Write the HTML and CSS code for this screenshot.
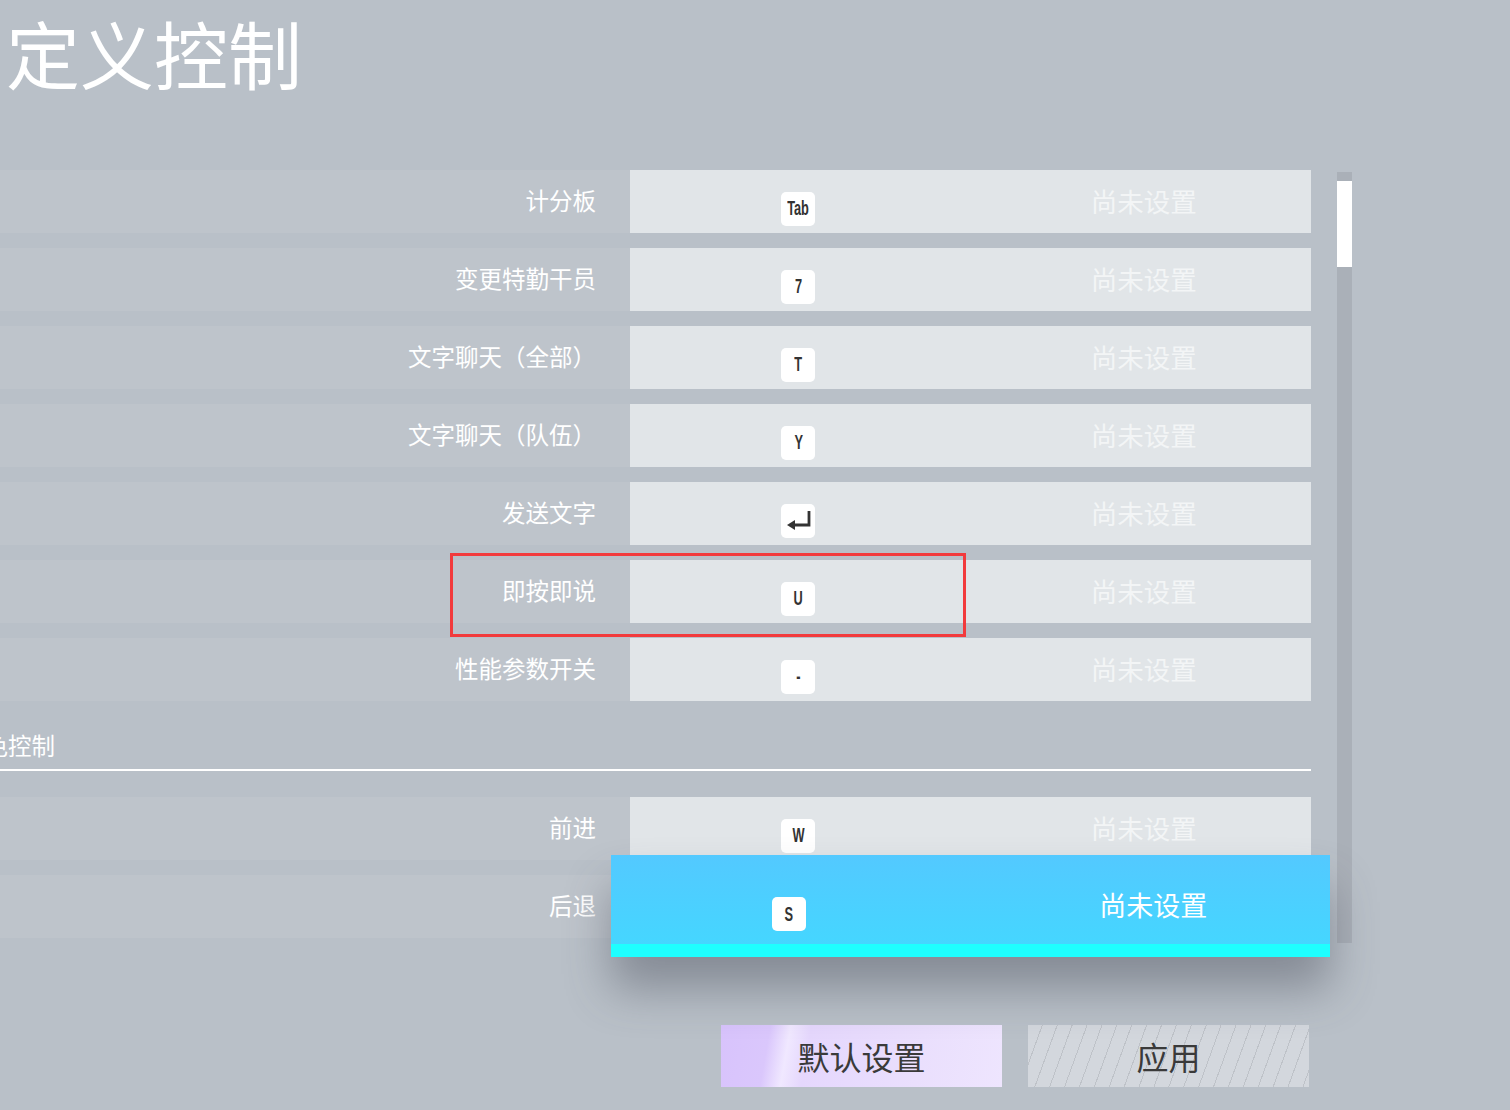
FILE: index.html
```html
<!DOCTYPE html>
<html lang="zh-CN">
<head>
<meta charset="UTF-8">
<title>自定义控制</title>
<link rel="stylesheet" href="styles.css">
</head>
<body>

<div class="page">
    <h1 class="title">定义控制</h1>

    <div class="panel">
        <div class="list">
            <div class="row"><div class="label">计分板</div><div class="bind"><div class="slot"><span class="key"><b>Tab</b></span></div><div class="slot"><span class="unset">尚未设置</span></div></div></div>
            <div class="row"><div class="label">变更特勤干员</div><div class="bind"><div class="slot"><span class="key"><b>7</b></span></div><div class="slot"><span class="unset">尚未设置</span></div></div></div>
            <div class="row"><div class="label">文字聊天（全部）</div><div class="bind"><div class="slot"><span class="key"><b>T</b></span></div><div class="slot"><span class="unset">尚未设置</span></div></div></div>
            <div class="row"><div class="label">文字聊天（队伍）</div><div class="bind"><div class="slot"><span class="key"><b>Y</b></span></div><div class="slot"><span class="unset">尚未设置</span></div></div></div>
            <div class="row"><div class="label">发送文字</div><div class="bind"><div class="slot"><span class="key"><svg width="34" height="34" viewBox="0 0 34 34"><path d="M28 7 V21 H12" fill="none" stroke="#333" stroke-width="2.8"/><path d="M6 21 L14 16 V26 Z" fill="#333"/></svg></span></div><div class="slot"><span class="unset">尚未设置</span></div></div></div>
            <div class="row"><div class="label">即按即说</div><div class="bind"><div class="slot"><span class="key"><b>U</b></span></div><div class="slot"><span class="unset">尚未设置</span></div></div><div class="mark"></div></div>
            <div class="row"><div class="label">性能参数开关</div><div class="bind"><div class="slot"><span class="key"><b>-</b></span></div><div class="slot"><span class="unset">尚未设置</span></div></div></div>

            <div class="section"><span>角色控制</span></div>

            <div class="row"><div class="label">前进</div><div class="bind"><div class="slot"><span class="key"><b>W</b></span></div><div class="slot"><span class="unset">尚未设置</span></div></div></div>
            <div class="row active"><div class="label">后退</div><div class="bind"><div class="slot"><span class="key"><b>S</b></span></div><div class="slot"><span class="unset">尚未设置</span></div></div></div>
        </div>

        <div class="scrollbar"><div class="thumb"></div></div>
    </div>

    <div class="actions">
        <button class="btn btn-default">默认设置</button>
        <button class="btn btn-apply">应用</button>
    </div>
</div>

</body>
</html>
```

FILE: styles.css
```css
body {
    margin: 0;
    background: #b9c0c8;
    font-family: "Noto Sans CJK SC", "Noto Sans", sans-serif;
    color: #fff;
    overflow: hidden;
}
.page { width: 1510px; height: 1110px; overflow: hidden; }

.title {
    margin: 0;
    padding-left: 6px;
    font-size: 74px;
    font-weight: 400;
    line-height: 104px;
}

.panel {
    display: flex;
    align-items: flex-start;
    margin-top: 66px;
}
.list { width: 1311px; }

.row {
    position: relative;
    display: grid;
    grid-template-columns: 630px 681px;
    height: 63px;
    margin-bottom: 15px;
}
.label {
    display: flex;
    align-items: center;
    justify-content: flex-end;
    padding: 0 34px 3px 0;
    background: #bec4cb;
    font-size: 23.5px;
}
.bind {
    display: grid;
    grid-template-columns: 1fr 1fr;
    background: #e1e5e8;
}
.slot {
    display: flex;
    align-items: center;
    justify-content: center;
}
.key {
    display: flex;
    align-items: center;
    justify-content: center;
    width: 34px;
    height: 34px;
    margin: 14px 4px 0 0;
    background: #fff;
    border-radius: 5px;
    color: #333;
    font-family: "Liberation Sans", sans-serif;
    font-size: 20px;
}
.key b {
    display: inline-block;
    transform: scaleX(0.64);
    font-weight: bold;
}
.unset {
    margin: 0 0 3px 6px;
    font-size: 26.5px;
    color: #f3f5f6;
}

.mark {
    position: absolute;
    top: -7px;
    left: 450px;
    width: 516px;
    height: 84px;
    box-sizing: border-box;
    border: 3px solid #f23a3c;
}

.section {
    height: 55px;
    padding-top: 17px;
    box-sizing: border-box;
    border-bottom: 2px solid #fff;
    margin-bottom: 26px;
    font-size: 23.5px;
    line-height: 24px;
    overflow: hidden;
}
.section span { display: block; margin-left: -39px; }

.row.active .bind {
    position: relative;
    z-index: 2;
    margin: -20px -19px -19px -19px;
    padding-top: 13px;
    background: linear-gradient(#53c9ff, #45d6ff);
    border-bottom: 13px solid #1effff;
    box-shadow: 0 32px 45px rgba(70, 76, 88, 0.45);
}
.row.active .key { margin-top: 16px; }
.row.active .unset { color: #fff; font-size: 27px; }

.scrollbar {
    width: 15px;
    height: 771px;
    margin: 2px 0 0 26px;
    padding-top: 9px;
    box-sizing: border-box;
    background: #aab0b8;
}
.thumb { height: 86px; background: #fff; }

.actions {
    display: flex;
    justify-content: flex-end;
    gap: 26px;
    width: 1309px;
    margin-top: 72px;
}
.btn {
    width: 281px;
    height: 62px;
    border: none;
    padding: 0;
    font-family: "Noto Sans CJK SC", sans-serif;
    font-size: 32px;
    color: #3a3a3a;
    cursor: pointer;
}
.btn-default {
    background: linear-gradient(100deg, #d8c3fc 0%, #dac7fc 17%, #f0e8ff 24%, #e5d7fd 31%, #eadffd 70%, #eee5fe 100%);
}
.btn-apply {
    background: repeating-linear-gradient(110deg, #d3d7dd 0 13px, #bec2c8 13px 14px);
}
```
